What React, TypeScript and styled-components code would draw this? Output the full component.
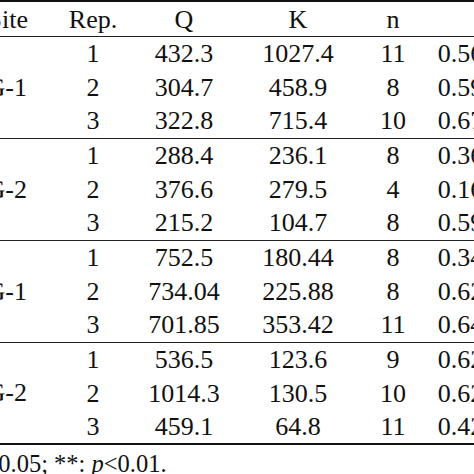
import { createGlobalStyle, styled } from 'styled-components';

const GlobalStyle = createGlobalStyle`
  html, body {
    margin: 0;
    padding: 0;
    background: #ffffff;
  }
  body {
    font-family: "Liberation Serif", "Times New Roman", serif;
    color: #111111;
  }
`;

const Viewport = styled.div`
  width: 474px;
  height: 474px;
  overflow: hidden;
  background: #ffffff;
`;

const Sheet = styled.div`
  margin-left: -70px;
  width: 608px;
`;

const Table = styled.table`
  border-collapse: collapse;
  table-layout: fixed;
  width: 608px;
  font-size: 26px;
  border-top: 2px solid #111;
  border-bottom: 2px solid #111;
`;

const HeadRow = styled.tr`
  height: 35px;
  border-bottom: 1px solid #222;
`;

const Th = styled.th<{ $align?: 'right' | 'center' }>`
  font-weight: normal;
  padding: 3px 0 0;
  text-align: ${({ $align }) => $align ?? 'center'};
  padding-right: ${({ $align }) => ($align === 'right' ? '22px' : '0')};
  line-height: 30px;
`;

const Group = styled.tbody`
  border-bottom: 1.5px solid #222;
`;

const Row = styled.tr`
  height: 34px;
`;

const Td = styled.td<{ $align?: 'right' | 'center' }>`
  padding: 1px 0 0;
  padding-right: ${({ $align }) => ($align === 'right' ? '23px' : '0')};
  text-align: ${({ $align }) => $align ?? 'center'};
  vertical-align: middle;
  line-height: 30px;
  white-space: nowrap;
`;

const Note = styled.p`
  margin: 0;
  padding-left: 17px;
  font-size: 24.5px;
  line-height: 37px;
  white-space: nowrap;
`;

const P = styled.i`
  font-style: italic;
`;

type Rec = [string, string, string, string, string];

const groups: { site: string; rows: Rec[] }[] = [
  {
    site: 'NG-1',
    rows: [
      ['1', '432.3', '1027.4', '11', '0.564**'],
      ['2', '304.7', '458.9', '8', '0.598**'],
      ['3', '322.8', '715.4', '10', '0.671**'],
    ],
  },
  {
    site: 'NG-2',
    rows: [
      ['1', '288.4', '236.1', '8', '0.365**'],
      ['2', '376.6', '279.5', '4', '0.169**'],
      ['3', '215.2', '104.7', '8', '0.593**'],
    ],
  },
  {
    site: 'SG-1',
    rows: [
      ['1', '752.5', '180.44', '8', '0.346**'],
      ['2', '734.04', '225.88', '8', '0.623**'],
      ['3', '701.85', '353.42', '11', '0.645**'],
    ],
  },
  {
    site: 'SG-2',
    rows: [
      ['1', '536.5', '123.6', '9', '0.622**'],
      ['2', '1014.3', '130.5', '10', '0.623**'],
      ['3', '459.1', '64.8', '11', '0.421**'],
    ],
  },
];

export default function App() {
  return (
    <Viewport>
      <GlobalStyle />
      <Sheet>
        <Table>
          <colgroup>
            <col style={{ width: 120 }} />
            <col style={{ width: 86 }} />
            <col style={{ width: 96 }} />
            <col style={{ width: 132 }} />
            <col style={{ width: 58 }} />
            <col style={{ width: 116 }} />
          </colgroup>
          <thead>
            <HeadRow>
              <Th $align="right">Site</Th>
              <Th>Rep.</Th>
              <Th>Q</Th>
              <Th>K</Th>
              <Th>n</Th>
              <Th>r</Th>
            </HeadRow>
          </thead>
          {groups.map((g) => (
            <Group key={g.site}>
              {g.rows.map((r, i) => (
                <Row key={r[0]}>
                  {i === 0 && (
                    <Td $align="right" rowSpan={3}>
                      {g.site}
                    </Td>
                  )}
                  {r.map((v, j) => (
                    <Td key={j}>{v}</Td>
                  ))}
                </Row>
              ))}
            </Group>
          ))}
        </Table>
        <Note>
          *: <P>p</P>&lt;0.05; **: <P>p</P>&lt;0.01.
        </Note>
      </Sheet>
    </Viewport>
  );
}
